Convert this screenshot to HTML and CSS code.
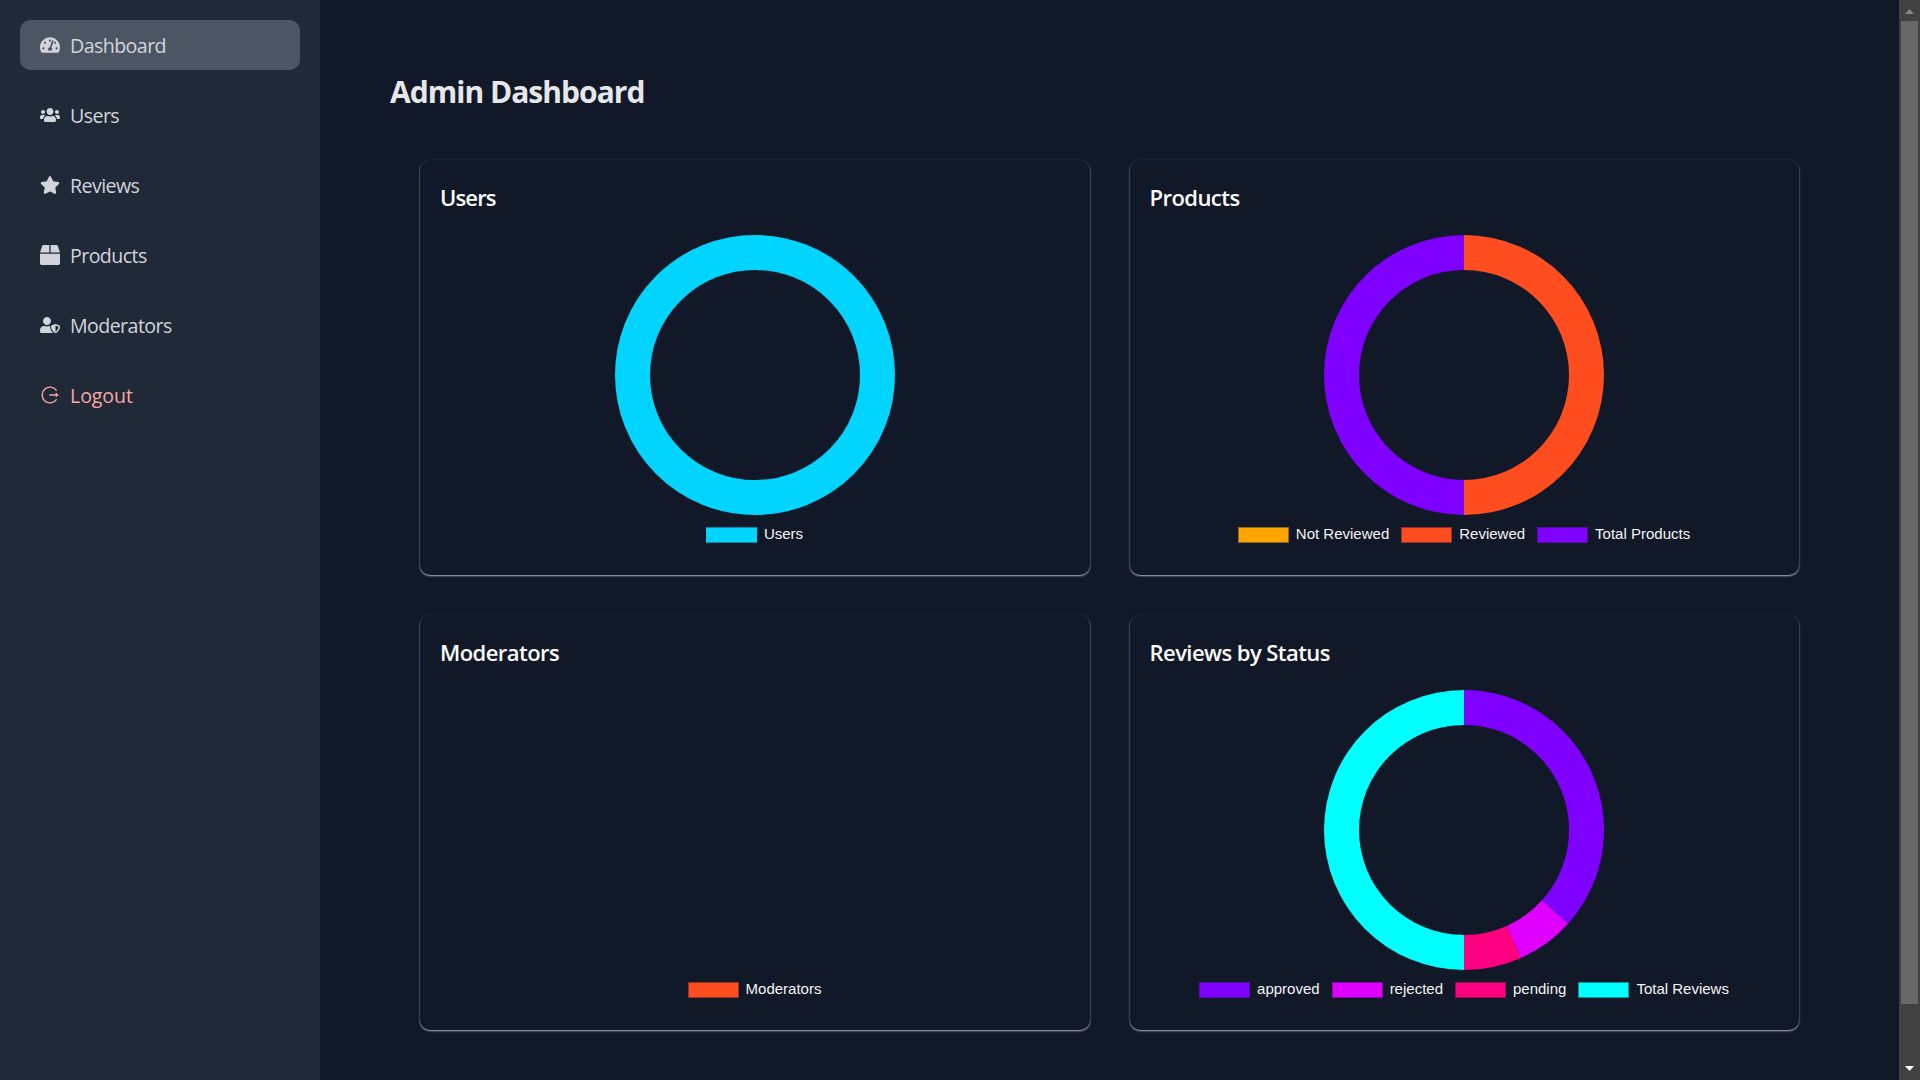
FILE: index.html
```html
<!DOCTYPE html>
<html lang="en">
<head>
<meta charset="utf-8">
<title>Admin Dashboard</title>
<link rel="stylesheet" href="styles.css">
</head>
<body>
<div class="app">
  <nav class="sidebar">
    <a class="item active"><svg class="icon" viewBox="0 0 576 512"><path d="M288 32C128.94 32 0 160.94 0 320c0 52.8 14.25 102.26 39.06 144.8 5.61 9.62 16.3 15.2 27.44 15.2h443c11.14 0 21.83-5.58 27.44-15.2C561.75 422.26 576 372.8 576 320c0-159.06-128.94-288-288-288zm0 64c14.71 0 26.58 10.13 30.32 23.65-1.11 2.26-2.64 4.23-3.45 6.67l-9.22 27.67c-5.13 3.49-10.97 6.01-17.64 6.01-17.67 0-32-14.33-32-32S270.33 96 288 96zM96 384c-17.67 0-32-14.33-32-32s14.33-32 32-32 32 14.33 32 32-14.33 32-32 32zm48-160c-17.67 0-32-14.33-32-32s14.33-32 32-32 32 14.33 32 32-14.33 32-32 32zm246.77-72.41l-61.33 184C343.13 347.33 352 364.54 352 384c0 11.72-3.38 22.55-8.88 32H232.88c-5.5-9.45-8.88-20.28-8.88-32 0-33.94 26.5-61.43 59.9-63.59l61.34-184.01c4.17-12.56 17.73-19.45 30.36-15.17 12.57 4.19 19.35 17.79 15.17 30.36zm14.66 57.2l15.52-46.55c3.47-1.29 7.13-2.23 11.05-2.23 17.67 0 32 14.33 32 32s-14.33 32-32 32c-11.38-.01-20.89-6.28-26.57-15.22zM480 384c-17.67 0-32-14.33-32-32s14.33-32 32-32 32 14.33 32 32-14.33 32-32 32z"/></svg><span>Dashboard</span></a>
    <a class="item"><svg class="icon" viewBox="0 0 640 512"><path d="M96 224c35.3 0 64-28.7 64-64s-28.7-64-64-64-64 28.7-64 64 28.7 64 64 64zm448 0c35.3 0 64-28.7 64-64s-28.7-64-64-64-64 28.7-64 64 28.7 64 64 64zm32 32h-64c-17.6 0-33.5 7.1-45.1 18.6 40.3 22.1 68.9 62 75.1 109.4h66c17.7 0 32-14.3 32-32v-32c0-35.3-28.7-64-64-64zm-256 0c61.9 0 112-50.1 112-112S381.9 32 320 32 208 82.1 208 144s50.1 112 112 112zm76.8 32h-8.3c-20.8 10-43.9 16-68.5 16s-47.6-6-68.5-16h-8.3C179.6 288 128 339.6 128 403.2V432c0 26.5 21.5 48 48 48h288c26.5 0 48-21.5 48-48v-28.8c0-63.6-51.6-115.2-115.2-115.2zm-223.7-13.4C161.5 263.1 145.6 256 128 256H64c-35.3 0-64 28.7-64 64v32c0 17.7 14.3 32 32 32h65.9c6.3-47.4 34.9-87.3 75.2-109.4z"/></svg><span>Users</span></a>
    <a class="item"><svg class="icon" viewBox="0 0 576 512"><path d="M259.3 17.8L194 150.2 47.9 171.5c-26.2 3.8-36.7 36.1-17.7 54.6l105.7 103-25 145.5c-4.5 26.3 23.2 46 46.4 33.7L288 439.6l130.7 68.7c23.2 12.2 50.9-7.4 46.4-33.7l-25-145.5 105.7-103c19-18.5 8.5-50.8-17.7-54.6L382 150.2 316.7 17.8c-11.7-23.6-45.6-23.9-57.4 0z"/></svg><span>Reviews</span></a>
    <a class="item"><svg class="icon" viewBox="0 0 512 512"><path d="M509.5 184.6L458.9 32.8C452.4 13.2 434.1 0 413.4 0H272v192h238.7c-.4-2.5-.4-5-1.2-7.4zM240 0H98.6c-20.7 0-39 13.2-45.5 32.8L2.5 184.6c-.8 2.4-.8 4.9-1.2 7.4H240V0zM0 224v240c0 26.5 21.5 48 48 48h416c26.5 0 48-21.5 48-48V224H0z"/></svg><span>Products</span></a>
    <a class="item"><svg class="icon" viewBox="0 0 640 512"><path d="M622.3 271.1l-115.2-45c-4.1-1.6-12.6-3.7-22.2 0l-115.2 45c-10.7 4.2-17.7 14-17.7 24.9 0 111.6 68.7 188.8 132.9 213.9 9.6 3.7 18 1.6 22.2 0C558.4 489.9 640 420.5 640 296c0-10.9-7-20.7-17.7-24.9zM496 462.4V273.3l95.5 37.3c-5.6 87.1-60.9 135.4-95.5 151.8zM224 256c70.7 0 128-57.3 128-128S294.7 0 224 0 96 57.3 96 128s57.3 128 128 128zm96 40c0-2.5.8-4.8 1.1-7.2-2.5-.1-4.9-.8-7.5-.8h-16.7c-22.2 10.2-46.9 16-72.9 16s-50.6-5.8-72.9-16h-16.7C60.2 288 0 348.2 0 422.4V464c0 26.5 21.5 48 48 48h352c6.8 0 13.3-1.5 19.2-4-54-42.9-99.2-116.7-99.2-212z"/></svg><span>Moderators</span></a>
    <a class="item logout"><svg class="icon" viewBox="0 0 20 20"><path d="M16.6 5.6A7.9 7.9 0 1 0 16.6 14.4" fill="none" stroke="currentColor" stroke-width="1.4"/><path d="M9.4 9.3h6.3V7.6L18.8 10l-3.1 2.4v-1.7H9.4z"/></svg><span>Logout</span></a>
  </nav>

  <main class="main">
    <h1 class="title">Admin Dashboard</h1>
    <div class="grid">
      <section class="card">
        <h2 class="heading tight">Users</h2>
        <svg class="chart" viewBox="-140 -140 280 280"><circle class="ring" r="122.5"/></svg>
        <div class="legend">
          <span class="entry"><i class="swatch sky"></i>Users</span>
        </div>
      </section>
      <section class="card">
        <h2 class="heading">Products</h2>
        <svg class="chart" viewBox="-140 -140 280 280">
          <path fill="#ff4d20" d="M0-140A140 140 0 0 1 0 140V105A105 105 0 0 0 0-105z"/>
          <path fill="#8000ff" d="M0-140A140 140 0 0 0 0 140V105A105 105 0 0 1 0-105z"/>
        </svg>
        <div class="legend">
          <span class="entry"><i class="swatch orange"></i>Not Reviewed</span>
          <span class="entry"><i class="swatch red"></i>Reviewed</span>
          <span class="entry"><i class="swatch violet"></i>Total Products</span>
        </div>
      </section>
      <section class="card">
        <h2 class="heading">Moderators</h2>
        <div class="chart"></div>
        <div class="legend">
          <span class="entry"><i class="swatch red"></i>Moderators</span>
        </div>
      </section>
      <section class="card">
        <h2 class="heading">Reviews by Status</h2>
        <svg class="chart" viewBox="-140 -140 280 280">
          <path fill="#8000ff" d="M0-140A140 140 0 0 1 104.04 93.68L78.03 70.26A105 105 0 0 0 0-105z"/>
          <path fill="#e000ff" d="M104.04 93.68A140 140 0 0 1 56.94 127.9L42.71 95.92A105 105 0 0 0 78.03 70.26z"/>
          <path fill="#ff0080" d="M56.94 127.9A140 140 0 0 1 0 140V105A105 105 0 0 0 42.71 95.92z"/>
          <path fill="#00ffff" d="M0-140A140 140 0 0 0 0 140V105A105 105 0 0 1 0-105z"/>
        </svg>
        <div class="legend">
          <span class="entry"><i class="swatch violet"></i>approved</span>
          <span class="entry"><i class="swatch magenta"></i>rejected</span>
          <span class="entry"><i class="swatch pink"></i>pending</span>
          <span class="entry"><i class="swatch aqua"></i>Total Reviews</span>
        </div>
      </section>
    </div>
  </main>

  <div class="scrollbar">
    <svg class="arrow" viewBox="0 0 21 21"><path fill="#868686" d="M6 14L10.5 9 15 14z"/></svg>
    <div class="thumb"></div>
    <svg class="arrow" viewBox="0 0 21 21"><path fill="#fff" d="M6 7L10.5 12 15 7z"/></svg>
  </div>
</div>
</body>
</html>
```
FILE: styles.css
```css
* { box-sizing: border-box; }
body {
  margin: 0;
  background: #111827;
  font-family: "Open Sans", "Noto Sans", sans-serif;
  overflow: hidden;
}
.app { display: flex; height: 1080px; }

.sidebar {
  width: 320px;
  padding: 20px;
  display: flex;
  flex-direction: column;
  gap: 20px;
  background: #1f2937;
}
.item {
  display: flex;
  align-items: center;
  gap: 10px;
  height: 50px;
  padding: 0 20px;
  border-radius: 10px;
  color: #d1d5db;
  font-size: 19.6px;
  letter-spacing: -0.57px;
}
.item span { padding-top: 1px; }
.item.active { background: #4b5563; }
.item.logout { color: #fca5a5; letter-spacing: -0.1px; }
.icon { width: 20px; height: 20px; fill: currentColor; }

.main { flex: 1; padding: 70px; }
.title {
  margin: 0 0 18px;
  padding-top: 2px;
  font-size: 30px;
  line-height: 40px;
  font-weight: 700;
  color: #e5e7eb;
  letter-spacing: -0.97px;
}
.grid {
  display: grid;
  grid-template-columns: 1fr 1fr;
  gap: 40px;
  padding: 30px;
}
.card {
  display: flex;
  flex-direction: column;
  align-items: center;
  height: 415px;
  padding: 20px 20.5px 20px 20px;
  border-radius: 10px;
  background: #111827;
  box-shadow: 0 1px 2px 0 #b2b7c0;
}
.heading {
  align-self: stretch;
  margin: 0 0 20px;
  font-size: 22px;
  line-height: 35px;
  font-weight: 600;
  color: #fff;
  letter-spacing: -0.55px;
}
.heading.tight { letter-spacing: -0.85px; }
.chart { width: 280px; height: 280px; flex: none; }
.ring { fill: none; stroke: #00d4ff; stroke-width: 35; }

.legend {
  display: flex;
  gap: 12px;
  margin-top: 12px;
  height: 16px;
}
.entry {
  display: flex;
  gap: 7px;
  font: 15px/14px "Liberation Sans", Arial, sans-serif;
  color: #f3f4f6;
  white-space: nowrap;
}
.swatch { width: 51px; height: 16px; border: 1px solid; }
.sky { background: #00d4ff; border-color: #0889a5 #00d4ff; }
.orange { background: #ffa500; border-color: #946714; }
.red { background: #ff4d20; border-color: #943523; }
.violet { background: #8000ff; border-color: #5010a0; }
.magenta { background: #e000ff; border-color: #8010a0; }
.pink { background: #ff0080; border-color: #901055; }
.aqua { background: #00ffff; border-color: #089094; }

.scrollbar {
  width: 21px;
  display: flex;
  flex-direction: column;
  align-items: center;
  background: #424242;
}
.arrow { width: 21px; height: 21px; }
.thumb { width: 17px; height: 983px; margin-bottom: 55px; background: #686868; }
```
